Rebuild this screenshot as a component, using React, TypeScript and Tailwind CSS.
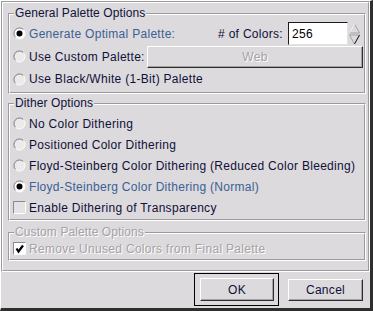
import React from 'react';

const TEXT = 'text-[#10103a]';
const BLUE = 'text-[#3b6095]';
const OFF = 'text-[#a5a3a5] [text-shadow:1px_1px_0_#ffffff]';

function Radio({ on }: { on?: boolean }) {
    return (
        <svg width="13" height="13" viewBox="0 0 13 13" className="shrink-0">
            <circle cx="6.5" cy="6.5" r="5.5" fill={on ? '#ffffff' : '#eceaec'} />
            <path d="M2.6 10.4 A5.5 5.5 0 0 1 10.4 2.6" fill="none" stroke="#7c7a7c" />
            <path d="M10.4 2.6 A5.5 5.5 0 0 1 2.6 10.4" fill="none" stroke="#ffffff" />
            {on && <circle cx="6.5" cy="6.5" r="3" fill="#000000" />}
        </svg>
    );
}

function Check({ on }: { on?: boolean }) {
    return (
        <svg width="13" height="13" viewBox="0 0 13 13" className="shrink-0">
            <rect x="0.5" y="0.5" width="12" height="12" fill={on ? '#ffffff' : '#e4e2e4'} stroke="#8c8a8c" />
            <path d="M12.5 0.5 V12.5 H0.5" fill="none" stroke="#ffffff" />
            {on && <path d="M3.5 6.5 L5.5 9.5 L10 3.5" fill="none" stroke="#000000" strokeWidth="2.2" />}
        </svg>
    );
}

function Frame({ title, off, className, children }: { title: string; off?: boolean; className: string; children: React.ReactNode }) {
    return (
        <div className={`border border-t-[#9c9a9c] border-l-[#9c9a9c] border-r-white border-b-white ${className}`}>
            <div className="h-full flex flex-col border border-t-white border-l-white border-r-[#9c9a9c] border-b-[#9c9a9c] pl-[3px]">
                <span className={`-mt-[9px] ml-[1px] self-start px-[1px] leading-[14px] tracking-[0.1px] bg-[#dcdadc] ${off ? OFF : TEXT}`}>
                    {title}
                </span>
                {children}
            </div>
        </div>
    );
}

function Option({ label, on, blue, h = 'h-[21px]' }: { label: string; on?: boolean; blue?: boolean; h?: string }) {
    return (
        <div className={`flex items-center gap-[3px] ${h}`}>
            <Radio on={on} />
            <span className={blue ? BLUE : TEXT}>{label}</span>
        </div>
    );
}

function Spin() {
    return (
        <svg width="11" height="22" viewBox="0 0 11 22" className="shrink-0">
            <path d="M5.5 1 L0.5 10 H10.5 Z" fill="#dcdadc" stroke="#a4a2a4" />
            <path d="M5.5 1 L0.5 10" stroke="#ffffff" />
            <path d="M0.5 12 H10.5 L5.5 21 Z" fill="#dcdadc" stroke="#a4a2a4" />
            <path d="M10.5 12 L5.5 21" stroke="#1c1c1c" />
        </svg>
    );
}

export default function App() {
    return (
        <div className="w-[373px] h-[311px] flex flex-col bg-[#dcdadc] border-t border-l border-t-white border-l-white border-r-[3px] border-b-[3px] border-r-[#2e2e2e] border-b-[#2e2e2e] text-[12px] tracking-[0.3px] font-['Liberation_Sans',Arial,sans-serif] overflow-hidden">
            {/* options panel */}
            <div className="h-[271px] shrink-0 flex flex-col border border-t-[#9c9a9c] border-l-[#9c9a9c] border-r-white border-b-white">
                <div className="h-full flex flex-col border border-t-white border-l-white border-r-[#9c9a9c] border-b-[#9c9a9c] pl-[5px] pr-[2px]">
                    <Frame title="General Palette Options" className="mt-[10px] h-[81px]">
                        <div className="mt-[2px] h-[23px] flex items-center">
                            <div className="flex-1 flex items-center gap-[3px]">
                                <Radio on />
                                <span className={BLUE}>Generate Optimal Palette:</span>
                            </div>
                            <span className={TEXT}># of Colors:</span>
                            <div className="ml-[5px] w-[60px] h-[23px] flex items-center pl-[3px] bg-white border border-t-[#1c1c1c] border-l-[#1c1c1c] border-r-[#e4e2e4] border-b-[#e4e2e4] text-black">
                                256
                            </div>
                            <div className="ml-[1px] mr-[4px]">
                                <Spin />
                            </div>
                        </div>
                        <div className="h-[23px] flex items-center pr-[1px]">
                            <div className="flex-1 flex items-center gap-[3px]">
                                <Radio />
                                <span className={TEXT}>Use Custom Palette:</span>
                            </div>
                            <div className={`mt-[1px] w-[216px] h-[22px] flex items-center justify-center border border-t-white border-l-white border-r-[#2e2e2e] border-b-[#2e2e2e] shadow-[inset_-1px_-1px_0_#a4a2a4] ${OFF}`}>
                                Web
                            </div>
                        </div>
                        <Option label="Use Black/White (1-Bit) Palette" h="h-[22px]" />
                    </Frame>

                    <Frame title="Dither Options" className="mt-[9px] h-[118px]">
                        <div className="mt-[3px]" />
                        <Option label="No Color Dithering" />
                        <Option label="Positioned Color Dithering" />
                        <Option label="Floyd-Steinberg Color Dithering (Reduced Color Bleeding)" />
                        <div className="flex items-center gap-[3px] h-[21px]">
                            <Radio on />
                            <span className={BLUE}>Floyd-Steinberg Color Dithering (Normal)</span>
                        </div>
                        <div className="flex items-center gap-[3px] h-[21px]">
                            <Check />
                            <span className={TEXT}>Enable Dithering of Transparency</span>
                        </div>
                    </Frame>

                    <Frame title="Custom Palette Options" off className="mt-[11px] h-[29px]">
                        <div className="flex items-center gap-[3px] h-[19px]">
                            <Check on />
                            <span className={OFF}>Remove Unused Colors from Final Palette</span>
                        </div>
                    </Frame>
                </div>
            </div>

            {/* buttons */}
            <div className="flex-1 flex items-start justify-end gap-[9px] pr-[7px]">
                <div className="mt-[1px] w-[85px] h-[33px] pt-[4px] pl-[5px] border border-t-black border-l-black border-r-black border-b-black">
                    <div className={`w-[74px] h-[23px] flex items-center justify-center border border-t-white border-l-white border-r-[#2e2e2e] border-b-[#2e2e2e] shadow-[inset_-1px_-1px_0_#a4a2a4] ${TEXT}`}>
                        OK
                    </div>
                </div>
                <div className={`mt-[7px] w-[75px] h-[22px] flex items-center justify-center border border-t-white border-l-white border-r-[#2e2e2e] border-b-[#2e2e2e] shadow-[inset_-1px_-1px_0_#a4a2a4] ${TEXT}`}>
                    Cancel
                </div>
            </div>
        </div>
    );
}
